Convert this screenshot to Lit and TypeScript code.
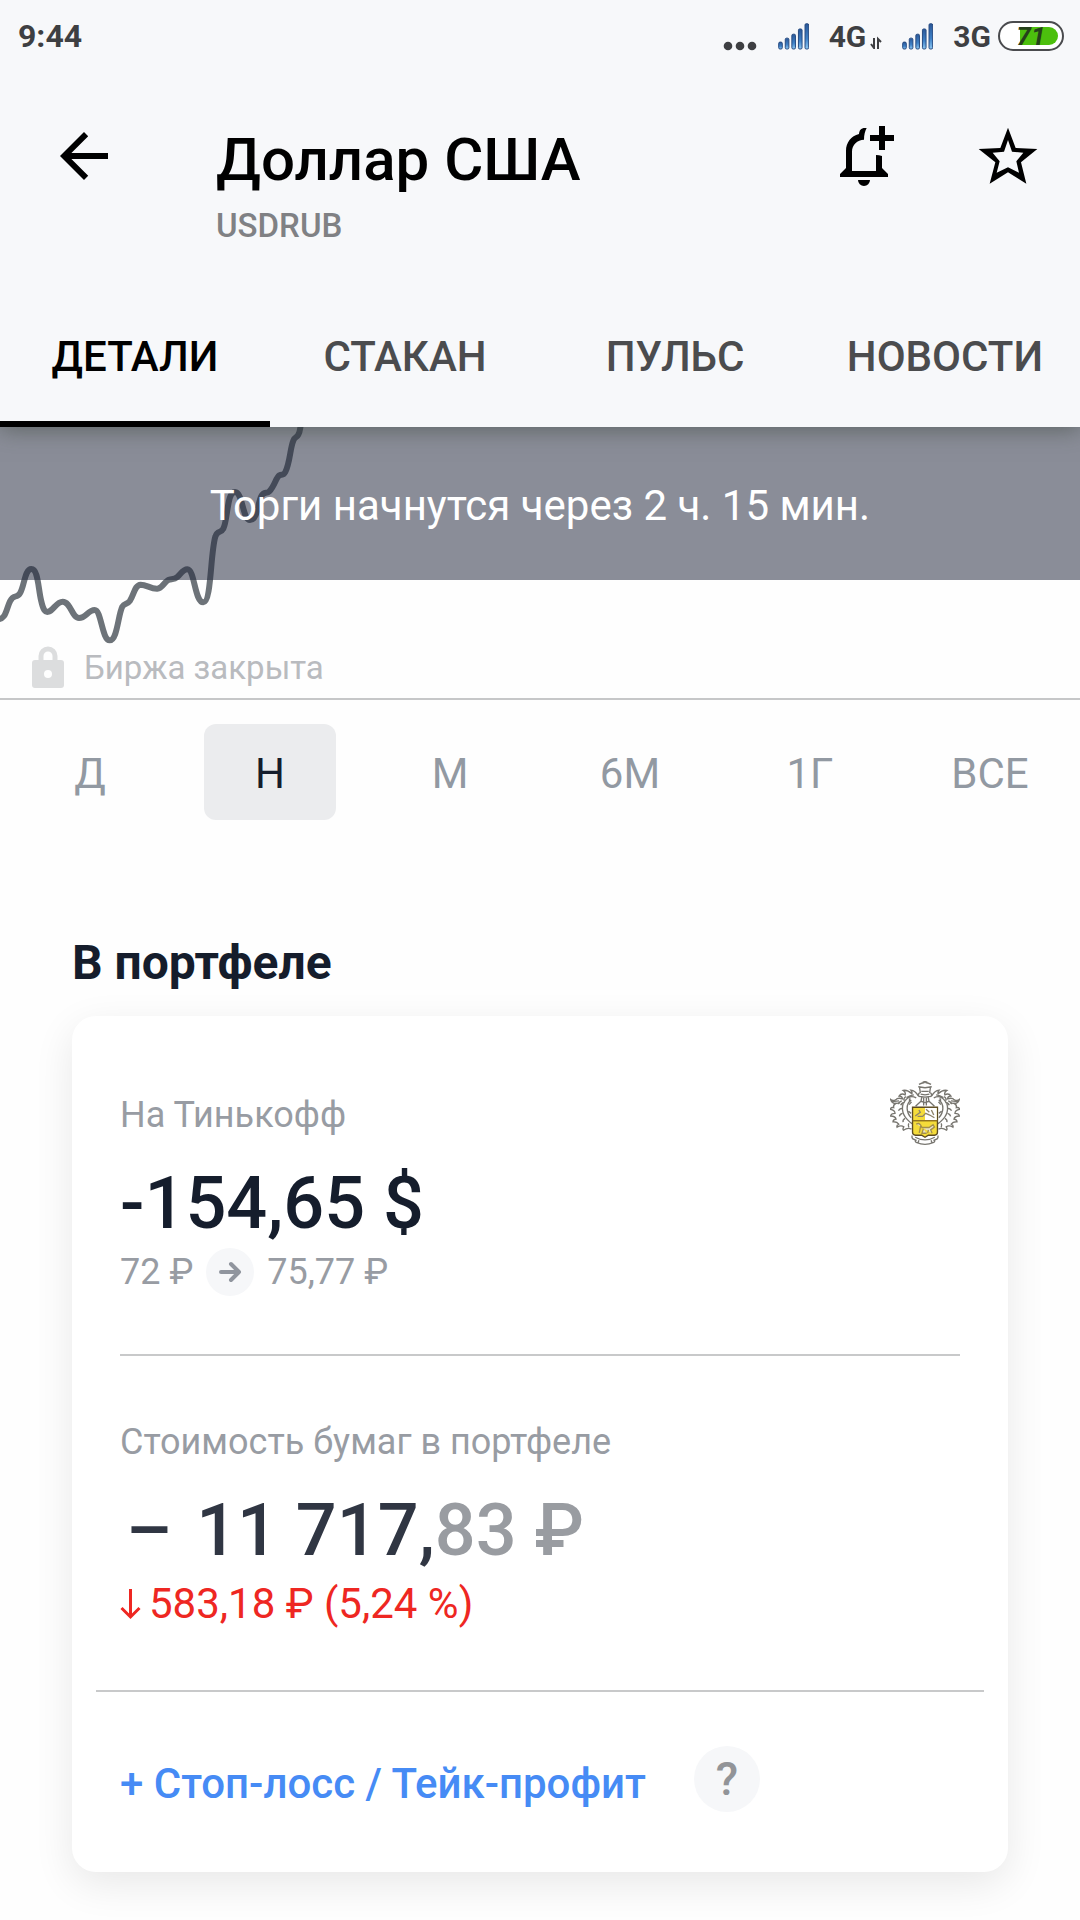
import { LitElement, html, css, svg } from 'lit'
import { customElement, state } from 'lit/decorators.js'

const tabs = ['Детали', 'Стакан', 'Пульс', 'Новости']
const ranges = ['Д', 'Н', 'М', '6М', '1Г', 'ВСЕ']
const barTops = [123, 111, 99, 83, 67]
const battery = 71

// half of the crest, mirrored around x = 194
const crestHalf = svg`
  <path d="M187 66 q7 -3 7 -1 M176 72 q18 -7 18 -5 M174 79 l20 3 M178 82 l2 14 q-8 4 -4 12 l18 2" />
  <path d="M183 93 h11 M181 101 l13 2 M185 108 l-3 14 l12 4 M190 111 v24 M182 122 q-9 8 -16 15" />
  <path d="M174 106 q-9 -16 -22 -17 q5 6 3 11 q-14 -13 -26 -10 q9 6 6 13 q-12 -6 -18 4 q10 0 10 8
           q-14 -5 -20 3 q-9 4 -15 -1 q5 14 17 11 q-10 4 -8 13 q-8 -2 -10 5 q14 2 14 12 q-12 0 -13 8
           q14 0 16 9 q-9 1 -9 8 q12 -1 17 7 q-7 3 -5 9 q12 -7 20 -1 q-4 6 -1 10 q13 -9 24 -3" />
  <path d="M168 112 q-16 -8 -27 2 q-15 13 -14 31 q1 17 14 31 q8 9 17 14 M161 103 q-12 1 -22 8
           M150 113 q-4 5 -1 10 M137 108 q-8 6 -5 12 M134 125 q-10 2 -12 9 M125 121 q-9 3 -10 10
           M128 143 q-9 0 -13 7 M127 158 q-8 2 -9 9 M135 173 q-8 4 -6 11 M146 188 q-3 5 0 12" />
  <path d="M153 118 q-13 10 -12 26 q1 16 12 27 M147 132 l7 -8 M145 152 l8 6 M96 123 l21 -2 M101 130 l18 -3" />
  <path d="M156 224 q-2 5 1 9 l10 5 q-4 4 1 6 q14 6 26 6 M165 229 q14 8 29 8 M176 238 l-3 8" />
`

@customElement('app-root')
export class AppRoot extends LitElement {
  @state() activeTab = 0
  @state() activeRange = 1

  static styles = css`
    :host {
      display: block;
      min-height: 100vh;
      background: #fefefe;
      color: #151d2c;
      font-family: Roboto, 'Liberation Sans', sans-serif;
    }

    *,
    *::before {
      box-sizing: border-box;
    }

    button {
      margin: 0;
      padding: 0;
      border: none;
      background: none;
      color: inherit;
      font: inherit;
      cursor: pointer;
    }

    svg {
      display: block;
      flex: none;
    }

    h1,
    h2,
    p {
      margin: 0;
    }

    header {
      position: relative;
      background: #f7f8fa;
      box-shadow: 0 2px 22px rgba(60, 70, 60, 0.6);
    }

    .status {
      display: flex;
      justify-content: space-between;
      align-items: center;
      height: 72px;
      padding: 0 16px 0 18px;
      color: #3e3f42;
      font-size: 30px;
      font-weight: 700;
    }

    .clock {
      font-size: 32px;
    }

    .indicators {
      display: flex;
      align-items: center;
      gap: 20px;
    }

    .network {
      display: flex;
      align-items: center;
      gap: 4px;
    }

    .power {
      display: flex;
      align-items: center;
      gap: 7px;
    }

    .battery {
      display: grid;
      align-items: center;
      width: 66px;
      height: 30px;
      padding: 0 4px;
      border: 2px solid #4a4b4e;
      border-radius: 15px;
      background: #fff;
    }

    .charge,
    .percent {
      grid-area: 1 / 1;
    }

    .charge {
      justify-self: end;
      height: 18px;
      border-radius: 0 9px 9px 0;
      background: #4cbf0d;
    }

    .percent {
      justify-self: center;
      color: #25401b;
      font-size: 26px;
      font-weight: 700;
      font-style: italic;
      line-height: 26px;
    }

    .bar {
      display: flex;
      align-items: flex-start;
      padding: 48px 36px 34px 48px;
      color: #000;
    }

    .bar svg {
      width: 72px;
      height: 72px;
      fill: currentColor;
    }

    .title {
      flex: 1;
      padding-left: 96px;
    }

    h1 {
      font-size: 60px;
      font-weight: 500;
      line-height: 80px;
    }

    .ticker {
      color: #808184;
      font-size: 33px;
      font-weight: 500;
      line-height: 52px;
    }

    .actions {
      display: flex;
      gap: 72px;
    }

    .tabs {
      display: grid;
      grid-template-columns: repeat(4, 1fr);
    }

    .tabs button {
      height: 141px;
      padding-top: 6px;
      border-bottom: 6px solid transparent;
      color: #4b4c4e;
      font-size: 42px;
      font-weight: 500;
      line-height: 50px;
      text-transform: uppercase;
    }

    .tabs button[aria-selected='true'] {
      border-color: #000;
      color: #000;
    }

    .chart {
      display: grid;
      grid-template-rows: 153px 118px;
      border-bottom: 2px solid #c6c7c8;
    }

    .line {
      grid-area: 1 / 1 / 3 / 2;
      width: 100%;
      height: 271px;
      fill: none;
      stroke: #6d7379;
      stroke-width: 6px;
    }

    .notice {
      grid-area: 1 / 1;
      display: flex;
      align-items: center;
      justify-content: center;
      padding-top: 4px;
      background: rgba(30, 36, 57, 0.52);
      color: #fff;
      font-size: 42px;
      line-height: 50px;
    }

    .closed {
      grid-area: 2 / 1;
      display: flex;
      align-items: flex-end;
      gap: 20px;
      padding: 0 32px 10px;
      color: #b9bbbf;
      font-size: 33px;
      line-height: 40px;
    }

    .ranges {
      display: grid;
      grid-template-columns: repeat(6, 1fr);
      padding-top: 24px;
    }

    .ranges button {
      height: 96px;
      margin: 0 24px;
      padding-top: 4px;
      border-radius: 12px;
      color: #9299a2;
      font-size: 42px;
      line-height: 50px;
    }

    .ranges button[aria-pressed='true'] {
      background: #ebecee;
      color: #151d2c;
    }

    .portfolio {
      padding: 115px 72px 48px;
    }

    h2 {
      margin-bottom: 25px;
      font-size: 48px;
      font-weight: 700;
      line-height: 56px;
    }

    .card {
      border-radius: 24px;
      background: #fff;
      box-shadow: 0 12px 40px rgba(0, 0, 0, 0.09);
    }

    .holding {
      display: flex;
      justify-content: space-between;
      align-items: flex-start;
      margin: 0 48px;
      padding: 65px 0 58px;
      border-bottom: 2px solid #c8c9ca;
    }

    .holding > div {
      padding-top: 12px;
    }

    .crest {
      width: 70px;
      height: 64px;
      fill: none;
      stroke: #77756f;
      stroke-width: 4px;
    }

    .label {
      color: #989ca3;
      font-size: 36px;
      line-height: 44px;
    }

    .value {
      margin-top: 23px;
      font-size: 72px;
      font-weight: 500;
      line-height: 88px;
    }

    .prices {
      display: flex;
      align-items: center;
      gap: 13px;
      color: #989ca3;
      font-size: 36px;
      line-height: 48px;
    }

    .worth {
      margin: 0 24px;
      padding: 64px 24px 61px;
      border-bottom: 2px solid #c8c9ca;
    }

    .worth .value {
      color: #303643;
    }

    .sign {
      margin: 0 6px;
    }

    .cents {
      color: #999ca1;
    }

    .change {
      display: flex;
      align-items: center;
      gap: 8px;
      margin-top: 4px;
      color: #ee2722;
      font-size: 42px;
      line-height: 50px;
    }

    .orders {
      display: flex;
      align-items: flex-end;
      gap: 48px;
      padding: 54px 48px 60px;
    }

    .add {
      color: #468bf5;
      font-size: 42px;
      font-weight: 500;
      line-height: 56px;
    }

    .help {
      width: 66px;
      height: 66px;
      border-radius: 50%;
      background: #f6f7f9;
      color: #929498;
      font-size: 46px;
      font-weight: 500;
      line-height: 66px;
    }
  `

  renderSignal() {
    return html`
      <svg width="31" height="27" viewBox="237 67 94 82" aria-hidden="true">
        <defs>
          <linearGradient id="signal" x1="0" y1="0" x2="0" y2="1">
            <stop offset="0" stop-color="#2a5797" />
            <stop offset="0.6" stop-color="#3f82c8" />
            <stop offset="1" stop-color="#8ec8f2" />
          </linearGradient>
        </defs>
        ${barTops.map(
          (top, i) => svg`<rect x=${239 + i * 20} y=${top + 2} width="11" height=${144 - top} rx="4"
            fill="url(#signal)" stroke="#274a80" stroke-width="3" />`
        )}
      </svg>
    `
  }

  renderHeader() {
    return html`
      <header>
        <div class="status">
          <span class="clock">9:44</span>
          <div class="indicators">
            <svg width="35" height="30" viewBox="0 0 35 30" fill="#3e3f42" aria-hidden="true">
              <circle cx="5" cy="25" r="4.3" />
              <circle cx="17" cy="25" r="4.3" />
              <circle cx="29" cy="25" r="4.3" />
            </svg>
            ${this.renderSignal()}
            <div class="network">
              <span>4G</span>
              <svg width="12" height="26" viewBox="0 0 12 26" fill="none" stroke="#3e3f42" stroke-width="2" aria-hidden="true">
                <path d="M4 15V25L1 21M8 26V16L11 19" />
              </svg>
            </div>
            ${this.renderSignal()}
            <div class="power">
              <span>3G</span>
              <div class="battery">
                <span class="charge" style=${`width:${battery}%`}></span>
                <span class="percent">${battery}</span>
              </div>
            </div>
          </div>
        </div>
        <div class="bar">
          <button type="button" aria-label="Назад">
            <svg viewBox="0 0 24 24"><path d="M20 11H7.8l5.6-5.6L12 4l-8 8 8 8 1.4-1.4L7.8 13H20z" /></svg>
          </button>
          <div class="title">
            <h1>Доллар США</h1>
            <p class="ticker">USDRUB</p>
          </div>
          <div class="actions">
            <button type="button" aria-label="Добавить уведомление">
              <svg viewBox="384 360 216 216">
                <path
                  d="M438 504V452C438 428 453 408 477 402C478 390 483 382 500 384C495 394 492 404 492 419C472 419 456 434 456 455V513H528V465Q537 465 546 468V504L564 522V531H420V522Z"
                />
                <path d="M474 540H510A18 18 0 0 1 474 540ZM537 378h18v27h27v18h-27v27h-18v-27h-27v-18h27z" />
              </svg>
            </button>
            <button type="button" aria-label="В избранное">
              <svg viewBox="816 360 216 216">
                <path
                  fill-rule="evenodd"
                  d="M924 383L947 444L1012 447L963 487L979 551L924 517L869 551L886 487L836 447L901 444ZM924 420L912 455L878 458L899 484L890 518L924 502L957 518L949 484L970 458L936 455Z"
                />
              </svg>
            </button>
          </div>
        </div>
        <nav class="tabs" role="tablist">
          ${tabs.map(
            (tab, i) => html`
              <button
                type="button"
                role="tab"
                aria-selected=${i === this.activeTab}
                @click=${() => (this.activeTab = i)}
              >
                ${tab}
              </button>
            `
          )}
        </nav>
      </header>
    `
  }

  renderChart() {
    return html`
      <section class="chart">
        <svg class="line" viewBox="0 21 3240 813" preserveAspectRatio="none" aria-hidden="true">
          <path
            vector-effect="non-scaling-stroke"
            d="M-10 597C18 601 18 568 30 544C42 520 50 537 60 520C74 496 74 447 94 447C114 447 114 500 123 540C130 572 136 578 146 575C160 571 170 545 188 545C212 545 216 594 237 594C258 594 264 570 284 570C304 570 306 661 329 661C352 661 354 585 367 560C374 547 380 556 390 542C402 524 404 495 422 494C440 494 452 507 472 506C488 505 494 482 508 479C518 477 524 478 532 471C544 459 550 448 562 448C584 448 584 547 610 547C634 547 631 400 646 350C652 328 662 342 670 326C684 298 680 216 705 216C728 216 728 300 750 300C774 300 774 244 784 228C792 214 800 222 808 214C824 198 828 172 838 166C846 162 850 168 856 156C870 128 870 86 880 62C886 48 890 54 895 44C901 34 900 24 903 12"
          />
        </svg>
        <p class="notice">Торги начнутся через 2 ч. 15 мин.</p>
        <p class="closed">
          <svg width="32" height="42" viewBox="0 0 32 42" aria-hidden="true">
            <path d="M9 16V10a7 7 0 0 1 14 0v6" fill="none" stroke="#dcddde" stroke-width="5" />
            <path
              fill="#dcddde"
              fill-rule="evenodd"
              d="M3 14h26q3 0 3 3v22q0 3-3 3H3q-3 0-3-3V17q0-3 3-3zM16 24a4 4 0 0 0 0 8a4 4 0 0 0 0-8z"
            />
          </svg>
          Биржа закрыта
        </p>
      </section>
    `
  }

  renderCard() {
    return html`
      <div class="card">
        <div class="holding">
          <div>
            <p class="label">На Тинькофф</p>
            <p class="value">-154,65 $</p>
            <p class="prices">
              72 ₽
              <svg width="48" height="48" viewBox="0 0 48 48" aria-hidden="true">
                <circle cx="24" cy="24" r="24" fill="#f6f7f9" />
                <path
                  d="M15 24H33M25 16L33 24L25 32"
                  fill="none"
                  stroke="#90959e"
                  stroke-width="4"
                  stroke-linecap="round"
                  stroke-linejoin="round"
                />
              </svg>
              75,77 ₽
            </p>
          </div>
          <svg class="crest" viewBox="92 62 204 190" aria-hidden="true">
            <g>${crestHalf}</g>
            <g transform="translate(388 0) scale(-1 1)">${crestHalf}</g>
            <path d="M157 140H231V214Q231 222 222 223H204L194 229L184 223H166Q157 222 157 214Z" fill="#f5dc3a" stroke="#5c4b22" />
            <path d="M194 142H229V178H194Z" fill="#fff" stroke="none" />
            <path d="M157 180H231" stroke="#8a6c1e" />
            <path
              d="M165 166L180 155L176 148M172 167H187L196 158L208 163L222 171M197 146L207 155M213 148L220 163"
              stroke="#8f8568"
            />
            <path
              d="M168 190Q176 185 181 193L185 200H206L218 192L222 199L211 207L215 217M181 196L177 216M189 204L185 217H199M204 207L202 217"
              fill="#e9e4cd"
              stroke="#a38f4a"
            />
          </svg>
        </div>
        <div class="worth">
          <p class="label">Стоимость бумаг в портфеле</p>
          <p class="value"><span class="sign">–</span> 11 717,<span class="cents">83 ₽</span></p>
          <p class="change">
            <svg width="21" height="32" viewBox="0 0 21 32" fill="none" stroke="currentColor" stroke-width="3" aria-hidden="true">
              <path d="M10.5 1V29M1.5 20L10.5 29L19.5 20" />
            </svg>
            583,18 ₽ (5,24 %)
          </p>
        </div>
        <div class="orders">
          <button class="add" type="button">+ Стоп-лосс / Тейк-профит</button>
          <button class="help" type="button">?</button>
        </div>
      </div>
    `
  }

  render() {
    return html`
      ${this.renderHeader()}
      <main>
        ${this.renderChart()}
        <div class="ranges">
          ${ranges.map(
            (range, i) => html`
              <button
                type="button"
                aria-pressed=${i === this.activeRange}
                @click=${() => (this.activeRange = i)}
              >
                ${range}
              </button>
            `
          )}
        </div>
        <section class="portfolio">
          <h2>В портфеле</h2>
          ${this.renderCard()}
        </section>
      </main>
    `
  }
}
